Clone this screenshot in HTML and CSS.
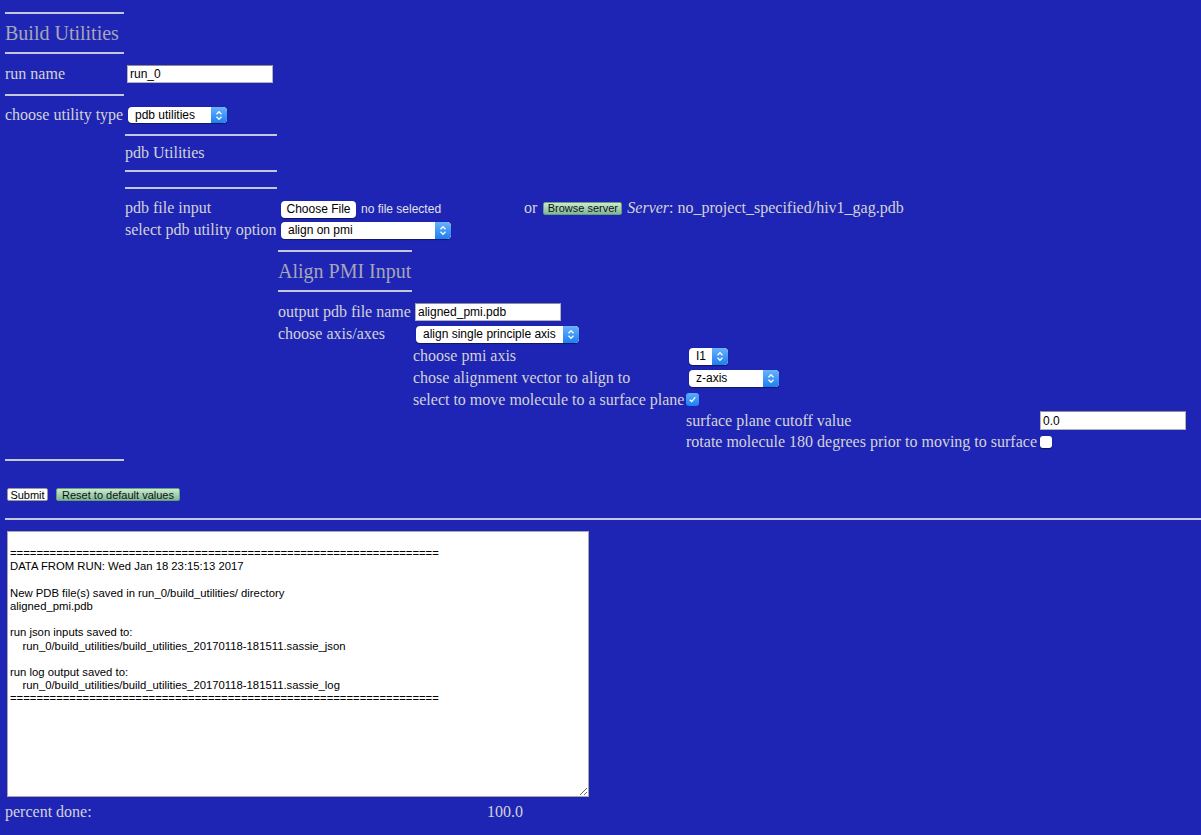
FILE: index.html
```html
<!DOCTYPE html>
<html>
<head>
<meta charset="utf-8">
<title>Build Utilities</title>
<link rel="stylesheet" href="styles.css">
</head>
<body>
<div class="page">
  <div class="hr w0"></div>
  <h1 class="title">Build Utilities</h1>
  <div class="hr w0"></div>
  <div class="pair l0 h40">
    <span>run name</span>
    <input class="txt in-run" type="text" value="run_0">
  </div>
  <div class="hr w0"></div>
  <div class="pair l0 h38">
    <span>choose utility type</span>
    <div class="sel s-util"><span class="sel-text">pdb utilities</span><span class="arr"><svg width="8" height="11" viewBox="0 0 8 11"><path d="M1.5 4.2 L4 1.7 L6.5 4.2 M1.5 6.8 L4 9.3 L6.5 6.8" stroke="#fff" fill="none" stroke-width="1.3"/></svg></span></div>
  </div>

  <div class="nest n1">
    <div class="hr w1"></div>
    <div class="subtitle">pdb Utilities</div>
    <div class="hr w1"></div>
    <div class="sp15"></div>
    <div class="hr w1"></div>
    <div class="sp8"></div>
    <div class="pair l1 h22">
      <span>pdb file input</span>
      <div class="filecell">
        <span class="file"><span class="btn-white">Choose File</span><span class="nofile">no file selected</span></span>
        <span class="or">or</span>
        <span class="btn-green">Browse server</span>
        <span class="server"><i>Server</i>: no_project_specified/hiv1_gag.pdb</span>
      </div>
    </div>
    <div class="pair l1 h22">
      <span>select pdb utility option</span>
      <div class="sel s-pdb"><span class="sel-text">align on pmi</span><span class="arr"><svg width="8" height="11" viewBox="0 0 8 11"><path d="M1.5 4.2 L4 1.7 L6.5 4.2 M1.5 6.8 L4 9.3 L6.5 6.8" stroke="#fff" fill="none" stroke-width="1.3"/></svg></span></div>
    </div>

    <div class="nest n2">
      <div class="sp9"></div>
      <div class="hr w2"></div>
      <h2 class="title">Align PMI Input</h2>
      <div class="hr w2"></div>
      <div class="sp9"></div>
      <div class="pair l2 h22">
        <span>output pdb file name</span>
        <input class="txt in-out" type="text" value="aligned_pmi.pdb">
      </div>
      <div class="pair l2 h22">
        <span>choose axis/axes</span>
        <div class="sel s-axes"><span class="sel-text">align single principle axis</span><span class="arr"><svg width="8" height="11" viewBox="0 0 8 11"><path d="M1.5 4.2 L4 1.7 L6.5 4.2 M1.5 6.8 L4 9.3 L6.5 6.8" stroke="#fff" fill="none" stroke-width="1.3"/></svg></span></div>
      </div>

      <div class="nest n3">
        <div class="pair l3 h22">
          <span>choose pmi axis</span>
          <div class="sel s-pmi"><span class="sel-text">I1</span><span class="arr"><svg width="8" height="11" viewBox="0 0 8 11"><path d="M1.5 4.2 L4 1.7 L6.5 4.2 M1.5 6.8 L4 9.3 L6.5 6.8" stroke="#fff" fill="none" stroke-width="1.3"/></svg></span></div>
        </div>
        <div class="pair l3 h22">
          <span>chose alignment vector to align to</span>
          <div class="sel s-vec"><span class="sel-text">z-axis</span><span class="arr"><svg width="8" height="11" viewBox="0 0 8 11"><path d="M1.5 4.2 L4 1.7 L6.5 4.2 M1.5 6.8 L4 9.3 L6.5 6.8" stroke="#fff" fill="none" stroke-width="1.3"/></svg></span></div>
        </div>
        <div class="pair l3 h21">
          <span>select to move molecule to a surface plane</span>
          <span class="cb cb-on"><svg width="9" height="9" viewBox="0 0 9 9"><path d="M1.8 4.8 L3.7 6.6 L7.2 2.4" stroke="#fff" fill="none" stroke-width="1.4"/></svg></span>
        </div>

        <div class="nest n4">
          <div class="pair l4 h21">
            <span>surface plane cutoff value</span>
            <input class="txt in-cut" type="text" value="0.0">
          </div>
          <div class="pair l4 h21">
            <span>rotate molecule 180 degrees prior to moving to surface</span>
            <span class="cb cb-off"></span>
          </div>
        </div>
      </div>
    </div>
  </div>

  <div class="sp7"></div>
  <div class="hr w0"></div>
  <div class="sp26"></div>
  <div class="buttons">
    <span class="btn-submit">Submit</span>
    <span class="btn-green btn-reset">Reset to default values</span>
  </div>
  <div class="sp16"></div>
  <div class="hr"></div>
  <div class="sp11"></div>
  <textarea class="output">

=================================================================
DATA FROM RUN: Wed Jan 18 23:15:13 2017

New PDB file(s) saved in run_0/build_utilities/ directory
aligned_pmi.pdb

run json inputs saved to:
    run_0/build_utilities/build_utilities_20170118-181511.sassie_json

run log output saved to:
    run_0/build_utilities/build_utilities_20170118-181511.sassie_log
=================================================================
</textarea>
  <div class="pair percent">
    <span>percent done:</span>
    <span>100.0</span>
  </div>
</div>
</body>
</html>
```

FILE: styles.css
```css
html, body {
  margin: 0;
  padding: 0;
  background: #1e25b4;
}
body {
  font-family: "Liberation Serif", "Times New Roman", serif;
  font-size: 16px;
  color: #d3d3d6;
  overflow: hidden;
}
.page {
  padding: 12px 0 0 5px;
}
.hr {
  height: 2px;
  background: #c5c7da;
}
.w0 { width: 119px; }
.w1 { width: 152px; }
.w2 { width: 134px; }

.title {
  margin: 0;
  font-weight: normal;
  font-size: 20px;
  color: #a6a6b6;
  height: 38px;
  display: flex;
  align-items: center;
}
.subtitle {
  height: 34px;
  display: flex;
  align-items: center;
}

.sp7 { height: 7px; }
.sp8 { height: 8px; }
.sp9 { height: 9px; }
.sp11 { height: 11px; }
.sp15 { height: 15px; }
.sp16 { height: 16px; }
.sp26 { height: 26px; }

.pair {
  display: grid;
  align-items: center;
  justify-items: start;
  white-space: nowrap;
}
.l0 { grid-template-columns: 120px auto; }
.l1 { grid-template-columns: 153px auto; }
.l2 { grid-template-columns: 135px auto; }
.l3 { grid-template-columns: 273px auto; }
.l4 { grid-template-columns: 354px auto; }
.h40 { height: 40px; }
.h38 { height: 38px; }
.h22 { height: 22px; }
.h21 { height: 21px; }

.n1 { margin-left: 120px; }
.n2 { margin-left: 153px; }
.n3 { margin-left: 135px; }
.n4 { margin-left: 273px; }

/* text inputs */
.txt {
  box-sizing: border-box;
  height: 18px;
  margin: 0 0 0 2px;
  padding: 0 2px;
  border: 1px solid #b3b3b3;
  border-top-color: #8e8e8e;
  background: #fff;
  font-family: "Liberation Sans", Arial, sans-serif;
  font-size: 12px;
  color: #000;
  outline: none;
}
.in-run { width: 146px; }
.in-out { width: 146px; }
.in-cut { width: 146px; height: 19px; margin-left: 0; }

/* select look-alike */
.sel {
  display: inline-flex;
  align-items: stretch;
  box-sizing: border-box;
  height: 17px;
  margin-left: 3px;
  background: #fff;
  border-radius: 4px;
  box-shadow: 0 0.5px 1px rgba(0, 0, 0, 0.45);
  font-family: "Liberation Sans", Arial, sans-serif;
  font-size: 12px;
  color: #000;
  overflow: hidden;
}
.sel-text {
  flex: 1;
  display: flex;
  align-items: center;
  padding-left: 7px;
}
.arr {
  width: 16px;
  display: flex;
  align-items: center;
  justify-content: center;
  background: linear-gradient(#6ab2fb, #1c7ff2);
  border-radius: 0 4px 4px 0;
}
.s-util { width: 99px; height: 16px; }
.s-pdb { width: 170px; }
.s-axes { width: 163px; }
.s-pmi { width: 39px; }
.s-vec { width: 90px; }

/* checkboxes */
.cb {
  box-sizing: border-box;
  display: inline-flex;
  align-items: center;
  justify-content: center;
  border-radius: 3px;
}
.cb-on {
  width: 13px;
  height: 13px;
  background: linear-gradient(#5fadfb, #1d7ff1);
  margin-top: -1px;
}
.cb-off {
  width: 12px;
  height: 12px;
  background: #fff;
  box-shadow: 0 0.5px 1px rgba(0, 0, 0, 0.5);
}

/* file row */
.filecell {
  display: flex;
  align-items: center;
  white-space: nowrap;
}
.file {
  display: inline-flex;
  align-items: center;
  width: 239px;
  margin-left: 3px;
  margin-top: 2px;
}
.btn-white {
  box-sizing: border-box;
  display: inline-flex;
  align-items: center;
  justify-content: center;
  width: 75px;
  height: 17px;
  background: #fff;
  border-radius: 4px;
  box-shadow: 0 0.5px 1px rgba(0, 0, 0, 0.45);
  font-family: "Liberation Sans", Arial, sans-serif;
  font-size: 12px;
  color: #000;
}
.nofile {
  margin-left: 5px;
  font-family: "Liberation Sans", Arial, sans-serif;
  font-size: 12px;
  color: #e2e2ea;
}
.or {
  margin-left: 4px;
  margin-right: 6px;
}
.btn-green {
  box-sizing: border-box;
  display: inline-flex;
  align-items: center;
  justify-content: center;
  height: 13px;
  padding: 0 4px;
  background: linear-gradient(#c9ead0, #7fb894);
  border: 1px solid #6c9c7e;
  border-radius: 2px;
  font-family: "Liberation Sans", Arial, sans-serif;
  font-size: 11px;
  color: #111;
}
.filecell .btn-green {
  width: 79px;
}
.server {
  margin-left: 5px;
}

/* submit row */
.buttons {
  display: flex;
  align-items: center;
  height: 15px;
  padding-left: 2px;
}
.btn-submit {
  box-sizing: border-box;
  display: inline-flex;
  align-items: center;
  justify-content: center;
  width: 41px;
  height: 13px;
  background: #fff;
  border: 1px solid #9a9a9a;
  border-radius: 2px;
  font-family: "Liberation Sans", Arial, sans-serif;
  font-size: 11px;
  color: #000;
}
.btn-reset {
  width: 124px;
  margin-left: 8px;
}

/* output */
.output {
  display: block;
  box-sizing: border-box;
  width: 582px;
  height: 266px;
  margin: 0 0 0 2px;
  padding: 2px 2px 0;
  border: 1px solid #a7a7a7;
  background: #fff;
  font-family: "Liberation Sans", Arial, sans-serif;
  font-size: 11.3px;
  line-height: 13.2px;
  color: #000;
  resize: both;
  outline: none;
}
.percent {
  grid-template-columns: 482px auto;
  height: 30px;
}
```
